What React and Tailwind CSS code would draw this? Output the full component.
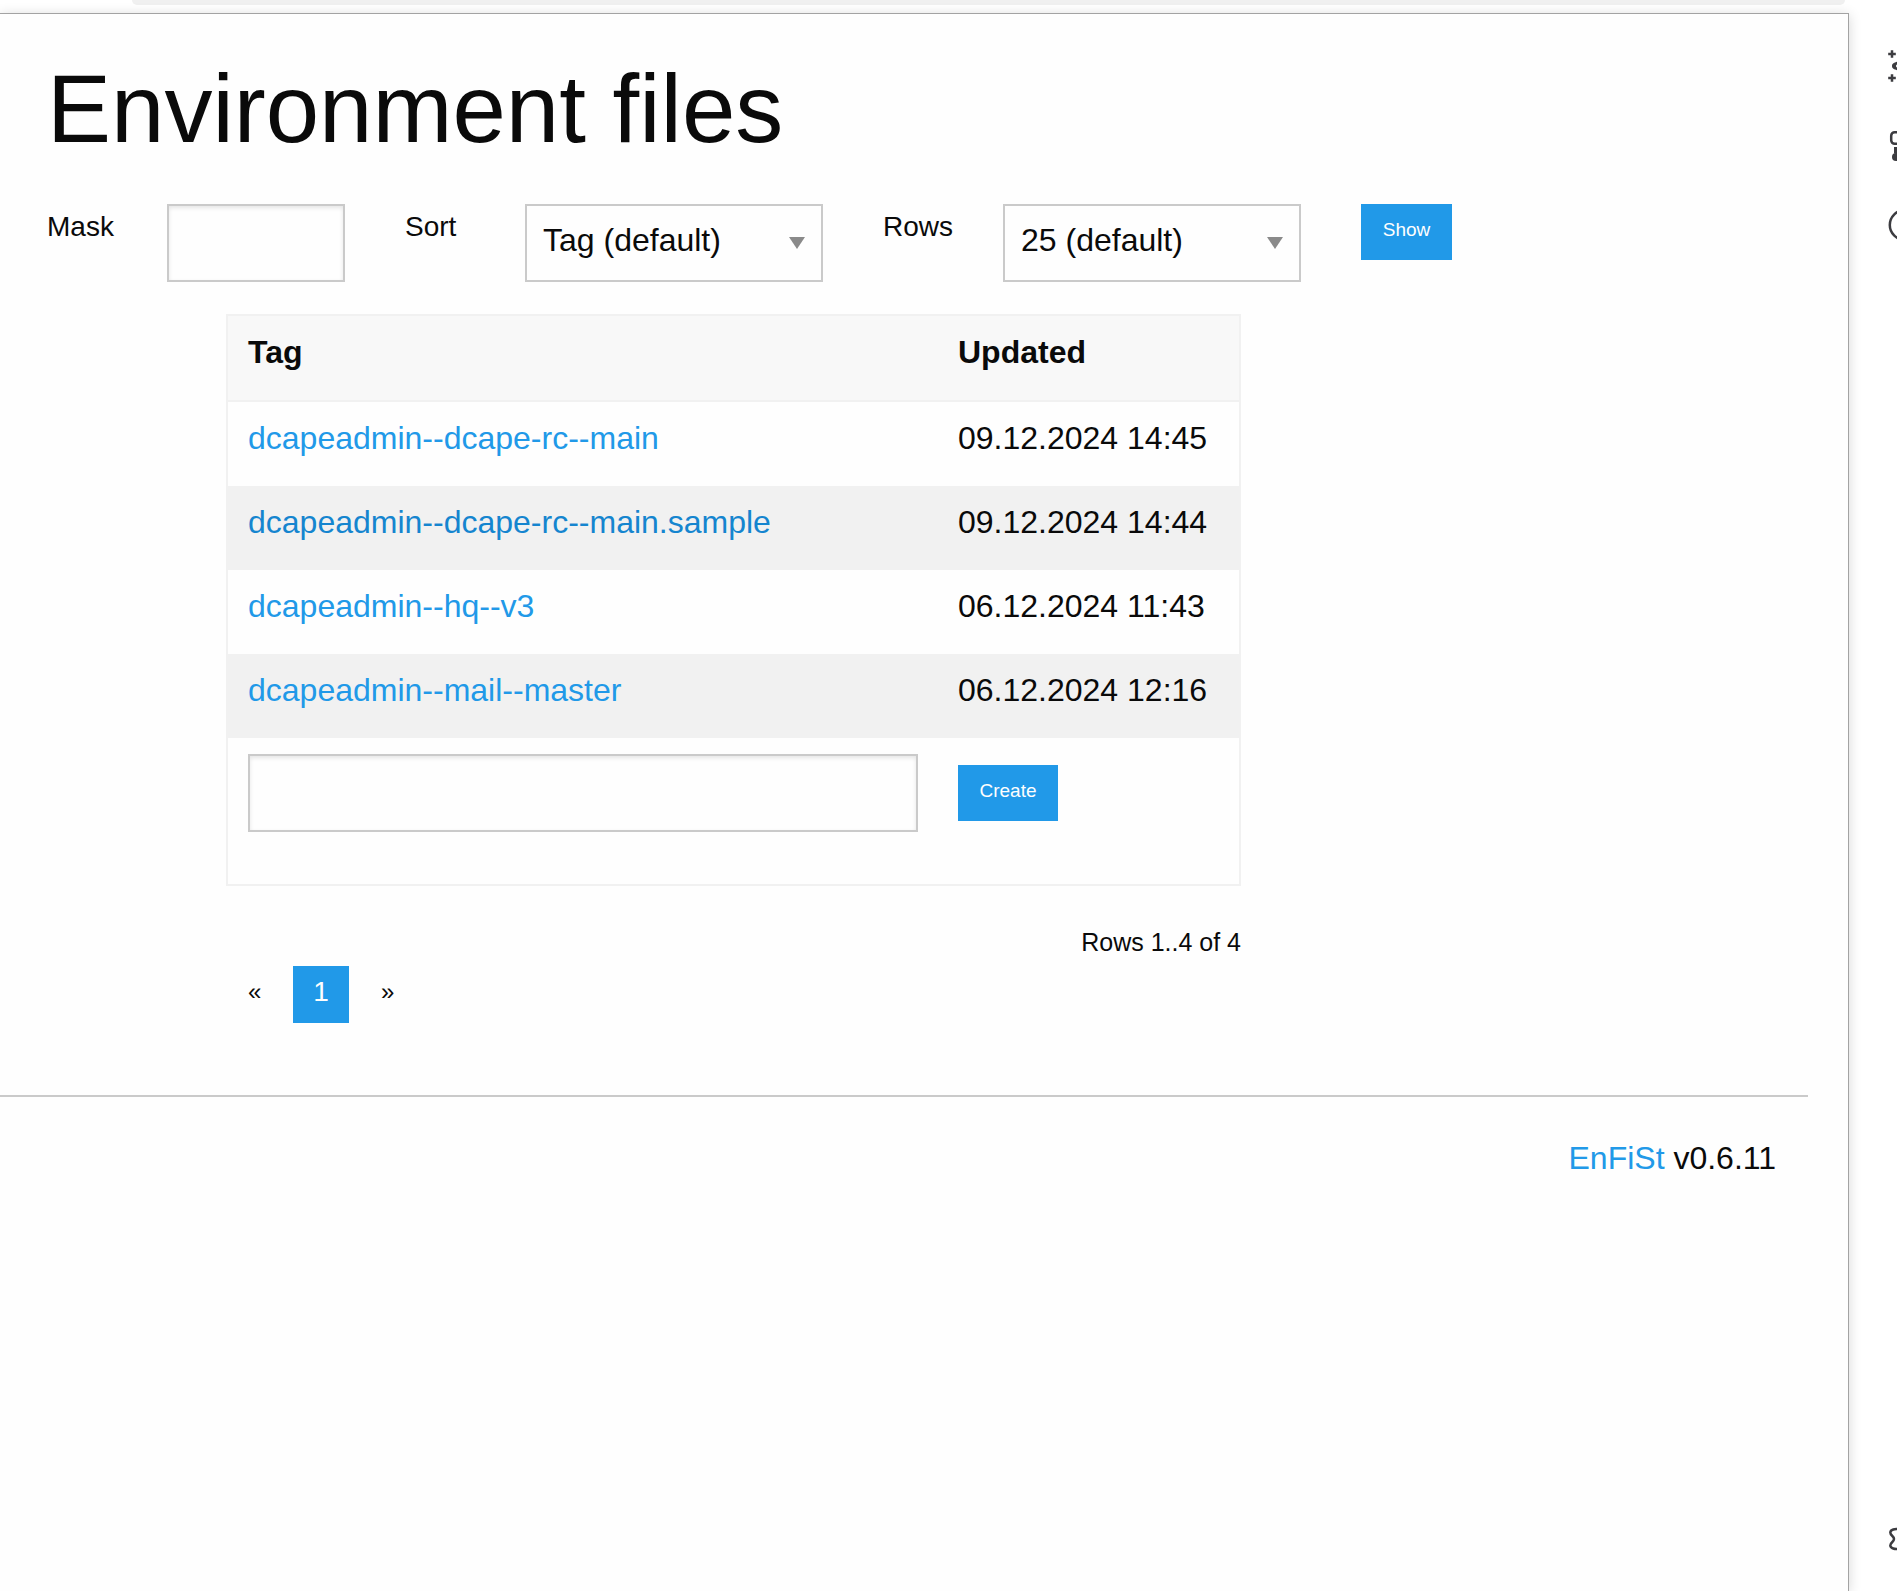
const rows = [
  { tag: 'dcapeadmin--dcape-rc--main', updated: '09.12.2024 14:45' },
  { tag: 'dcapeadmin--dcape-rc--main.sample', updated: '09.12.2024 14:44', hovered: true },
  { tag: 'dcapeadmin--hq--v3', updated: '06.12.2024 11:43' },
  { tag: 'dcapeadmin--mail--master', updated: '06.12.2024 12:16' },
];

const fieldClass =
  'block h-[78px] w-full border-2 border-[#cacaca] bg-[#fefefe] px-4 text-[32px] text-[#0a0a0a] shadow-[inset_0_2px_4px_rgba(10,10,10,0.1)]';

function Field({ id, label, children, width }) {
  return (
    <div className="flex shrink-0 items-start">
      <label htmlFor={id} className="w-[120px] text-[28px] leading-[46px]">
        {label}
      </label>
      <div className={width}>{children}</div>
    </div>
  );
}

function Select({ id, value }) {
  return (
    <div className="relative">
      <select
        id={id}
        className="block h-[78px] w-full appearance-none border-2 border-[#cacaca] bg-[#fefefe] px-4 pb-1.5 text-[32px] text-[#0a0a0a]"
      >
        <option>{value}</option>
      </select>
      <svg
        viewBox="0 0 16 12"
        className="pointer-events-none absolute right-[18px] top-[33px] h-3 w-4"
        aria-hidden="true"
      >
        <path d="M0 0h16L8 12z" fill="#8a8a8a" />
      </svg>
    </div>
  );
}

function SideIcon({ label, children }) {
  return (
    <button type="button" aria-label={label} className="block h-10 w-10">
      <svg viewBox="0 0 40 40" className="h-10 w-10" fill="none" stroke="#3c3c40" strokeWidth="2.5">
        {children}
      </svg>
    </button>
  );
}

export default function App() {
  return (
    <div className="flex min-h-screen flex-col overflow-hidden bg-white font-['Liberation_Sans',Arial,sans-serif] text-[#0a0a0a]">
      <div className="flex min-h-screen">
        <div className="flex min-w-0 flex-1 flex-col">
          <div className="h-[13px] shrink-0 pl-[132px]">
            <div className="mr-1 h-[5px] rounded-b-lg bg-[#f0f0f0]" />
          </div>
          <main className="flex-1 border-r border-t border-[#a3a3a3] bg-[#fefefe] shadow-[0_2px_12px_rgba(0,0,0,0.16)]">
            <div className="pl-[47px]">
              <h1 className="pt-7 text-[96px] leading-[134px]">Environment files</h1>
              <form className="mt-7 flex items-start gap-[60px]" onSubmit={(e) => e.preventDefault()}>
                <Field id="mask" label="Mask" width="w-[178px]">
                  <input id="mask" type="text" className={fieldClass} />
                </Field>
                <Field id="sort" label="Sort" width="w-[298px]">
                  <Select id="sort" value="Tag (default)" />
                </Field>
                <Field id="rows" label="Rows" width="w-[298px]">
                  <Select id="rows" value="25 (default)" />
                </Field>
                <button type="submit" className="h-14 w-[91px] bg-[#2199e8] pb-1 text-[19px] text-[#fefefe]">
                  Show
                </button>
              </form>
            </div>

            <section className="ml-[226px] mt-8 max-w-[1015px]">
              <table className="w-full border-2 border-[#f1f1f1] text-left text-[32px] leading-[48px]">
                <thead>
                  <tr className="h-[86px] border-b-2 border-[#f1f1f1] bg-[#f8f8f8]">
                    <th className="px-5 pb-6 pt-3 font-bold">Tag</th>
                    <th className="w-[302px] px-5 pb-6 pt-3 font-bold">Updated</th>
                  </tr>
                </thead>
                <tbody>
                  {rows.map((row) => (
                    <tr key={row.tag} className="even:bg-[#f1f1f1]">
                      <td className="px-5 pb-6 pt-3">
                        <a href="#" className={row.hovered ? 'text-[#1585cf]' : 'text-[#2199e8]'}>
                          {row.tag}
                        </a>
                      </td>
                      <td className="whitespace-nowrap px-5 pb-6 pt-3">{row.updated}</td>
                    </tr>
                  ))}
                  <tr>
                    <td className="px-5 pb-[52px] pt-4">
                      <input aria-label="New tag" type="text" className={fieldClass} />
                    </td>
                    <td className="px-5 pb-[52px] pt-4 align-middle">
                      <button type="button" className="block h-14 w-[100px] bg-[#2199e8] pb-1 text-[19px] text-[#fefefe]">
                        Create
                      </button>
                    </td>
                  </tr>
                </tbody>
              </table>

              <p className="mt-9 text-right text-[25px] leading-10">Rows 1..4 of 4</p>
              <nav aria-label="Pagination" className="mt-1 flex h-[57px] gap-3 text-[28px] leading-[52px]">
                <a href="#" className="pl-[22px] pr-5 text-2xl leading-[52px]">«</a>
                <span aria-current="page" className="bg-[#2199e8] px-5 text-[#fefefe]">1</span>
                <a href="#" className="px-5 text-2xl leading-[52px]">»</a>
              </nav>
            </section>

            <footer className="mr-10 mt-[72px] border-t-2 border-[#cacaca] pr-8 pt-[37px] text-right text-[32px] leading-[48px]">
              <a href="#" className="text-[#2199e8]">EnFiSt</a> v0.6.11
            </footer>
          </main>
        </div>

        <aside className="flex w-12 shrink-0 flex-col overflow-hidden pb-8 pl-9 pt-[46px]">
          <div className="flex flex-1 flex-col gap-10">
            <SideIcon label="Sparkles">
              <path d="M7 4.2v7.6M3.2 8h7.6M7 28.2v7.6M3.2 32h7.6" />
              <path
                d="M7 20C7 17 10 16.5 13 15.5Q17 14 19 5Q21 14 29 20Q21 26 19 35Q17 26 13 24.5C10 23.5 7 23 7 20zM11 20a1.5 1.5 0 1 0 3 0a1.5 1.5 0 1 0-3 0z"
                fill="#3c3c40"
                fillRule="evenodd"
                stroke="none"
              />
            </SideIcon>
            <SideIcon label="Tools">
              <rect x="6.2" y="6.2" width="24" height="11.6" rx="3.5" />
              <path d="M10.5 21v6.5" strokeWidth="3" />
              <circle cx="11" cy="31" r="4" fill="#3c3c40" stroke="none" />
            </SideIcon>
            <SideIcon label="History">
              <circle cx="19.5" cy="19" r="14.7" />
            </SideIcon>
          </div>
          <SideIcon label="Settings">
            <path d="M14 10.3C10 9.5 5.5 10.5 5.3 13.5C5.2 16.5 9 17 9 20C9 23 5.2 23.5 5.3 26.5C5.5 29.5 10 30.5 14 29.7" />
          </SideIcon>
        </aside>
      </div>
    </div>
  );
}
